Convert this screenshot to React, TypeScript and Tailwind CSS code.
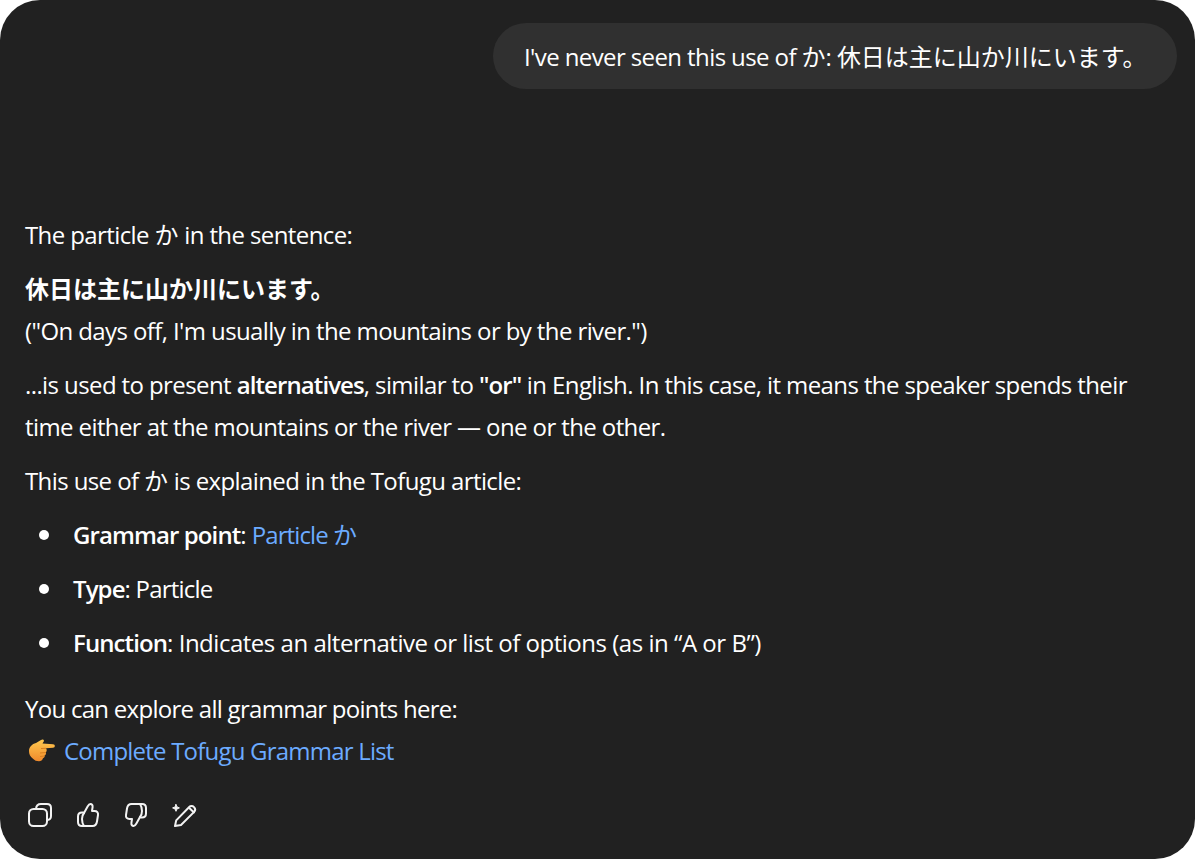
import React from "react";

const iconProps = {
  width: 30,
  height: 30,
  viewBox: "0 0 30 30",
  fill: "none",
  stroke: "#f3f3f3",
  strokeWidth: 2,
  strokeLinecap: "round" as const,
  strokeLinejoin: "round" as const,
};
const Copy = () => (
  <svg {...iconProps}>
    <path d="M11 9C11.200 5.800 13 4 16 4h6c2.600 0 4 1.500 4 4v8c0 2.400-1.300 3.800-3.700 4" />
    <rect x="4" y="9" width="18" height="17" rx="4.500" />
  </svg>
);
const thumb = "M11 13l3.600-6.500c.8-1.400 1.600-2.500 2.800-2.500 1.600 0 2.400 1.400 2.200 3l-.6 4h2.500c2.500 0 3.900 1.700 3.500 4l-1 6.500c-.4 2.500-2 4.500-4.500 4.500H9c-2.500 0-4-1.800-4-4v-5.500c0-2.500 1.500-4 4-4h2";
const thumbEdge = "M11 13c-1.500 1.800-2 3.500-2 6 0 2.800.6 5 2 7";
const Up = () => (
  <svg {...iconProps}>
    <path d={thumb} />
    <path d={thumbEdge} />
  </svg>
);
const Down = () => (
  <svg {...iconProps}>
    <g transform="rotate(180 15 15)">
      <path d={thumb} />
      <path d={thumbEdge} />
    </g>
  </svg>
);
const Spark = () => (
  <svg {...iconProps}>
    <path d="M6 26l1.200-5.600L20 7.200c1.500-1.500 3.600-1.500 5-.1 1.400 1.400 1.400 3.500-.1 5L12 25z" />
    <path d="M20 7.700l5 4.700" />
    <path d="M7 4.500l1 2.400 2.400 1-2.400 1-1 2.400-1-2.400-2.400-1 2.400-1z" fill="#f3f3f3" strokeWidth="1" />
  </svg>
);
const Hand = () => (
  <svg width="28" height="26" viewBox="0 0 28 26" className="shrink-0">
    <defs>
      <linearGradient id="handFill" x1="0" y1="0" x2="0" y2="1">
        <stop offset="0" stopColor="#ffc94f" />
        <stop offset="1" stopColor="#f08a2c" />
      </linearGradient>
    </defs>
    <path d="M1 13c0-4 3-7 7-8l5-3c1.500-1 3-.5 3 1l-1.500 2.500L25 6.200c2.500.2 2.500 3.300 0 3.500l-7 .6c1 1.500 1 3-.2 4 .5 1.500 0 2.700-1.200 3.200.2 1.300-.4 2.300-1.600 2.700-.5 2-2 3-4 3-2.500 0-4.500-.8-6-2.500C2 18.500 1 16 1 13z" fill="url(#handFill)" />
    <path d="M13 10.500l5-.2M12 15l6-.5M12 18.500l4.500-.5" stroke="#d97f1f" strokeWidth="1" fill="none" />
  </svg>
);
const J = ({ children }: { children: React.ReactNode }) => <span className="tracking-normal">{children}</span>;
const B = ({ children }: { children: React.ReactNode }) => <strong className="font-semibold tracking-[-0.9px]">{children}</strong>;
const Dot = () => <span className="w-[10px] h-[10px] rounded-full bg-white shrink-0" />;

export default function App() {
  return (
    <div className="w-[1195px] h-[859px] bg-white overflow-hidden">
      <div className="w-full h-full bg-[#212121] rounded-[40px] px-[25px] pt-[23px] text-[24px] leading-[42px] text-[#ffffff] font-['Open_Sans','Noto_Sans_CJK_JP',sans-serif] tracking-[-0.6px]">
        <div className="flex justify-end -mr-[7px]">
          <div className="h-[66px] w-[684px] rounded-full bg-[#303030] pl-[31px] pt-[2px] flex items-center whitespace-nowrap">
            <span>
              I've never seen this use of <J>か</J>: <J>休日は主に山か川にいます。</J>
            </span>
          </div>
        </div>
        <div className="mt-[125px] flex flex-col gap-[12px]">
          <p>
            The particle <J>か</J> in the sentence:
          </p>
          <p>
            <strong className="font-semibold tracking-normal">休日は主に山か川にいます。</strong>
            <br />
            ("On days off, I'm usually in the mountains or by the river.")
          </p>
          <p className="max-w-[1115px]">
            ...is used to present <B>alternatives</B>, similar to <B>"or"</B> in English. In this case, it means the speaker spends their time either at the mountains or the river — one or the other.
          </p>
          <p>
            This use of <J>か</J> is explained in the Tofugu article:
          </p>
          <ul className="flex flex-col gap-[12px] pl-[14px]">
            <li className="flex items-center gap-[24px]">
              <Dot />
              <span>
                <B>Grammar point</B>:{" "}
                <span className="text-[#6cabff] tracking-[-0.9px]">
                  Particle <J>か</J>
                </span>
              </span>
            </li>
            <li className="flex items-center gap-[24px]">
              <Dot />
              <span className="tracking-[-0.8px]">
                <B>Type</B>: Particle
              </span>
            </li>
            <li className="flex items-center gap-[24px]">
              <Dot />
              <span className="tracking-[-0.48px]">
                <B>Function</B>: Indicates an alternative or list of options (as in “A or B”)
              </span>
            </li>
          </ul>
          <p className="mt-[12px]">
            <span className="tracking-[-0.72px]">You can explore all grammar points here:</span>
            <br />
            <span className="inline-flex items-center gap-[8px] pl-[3px] align-top">
              <Hand />
              <span className="text-[#6cabff] tracking-[-0.79px]">Complete Tofugu Grammar List</span>
            </span>
          </p>
        </div>
        <div className="mt-[28px] flex gap-[18px]">
          <Copy />
          <Up />
          <Down />
          <Spark />
        </div>
      </div>
    </div>
  );
}
